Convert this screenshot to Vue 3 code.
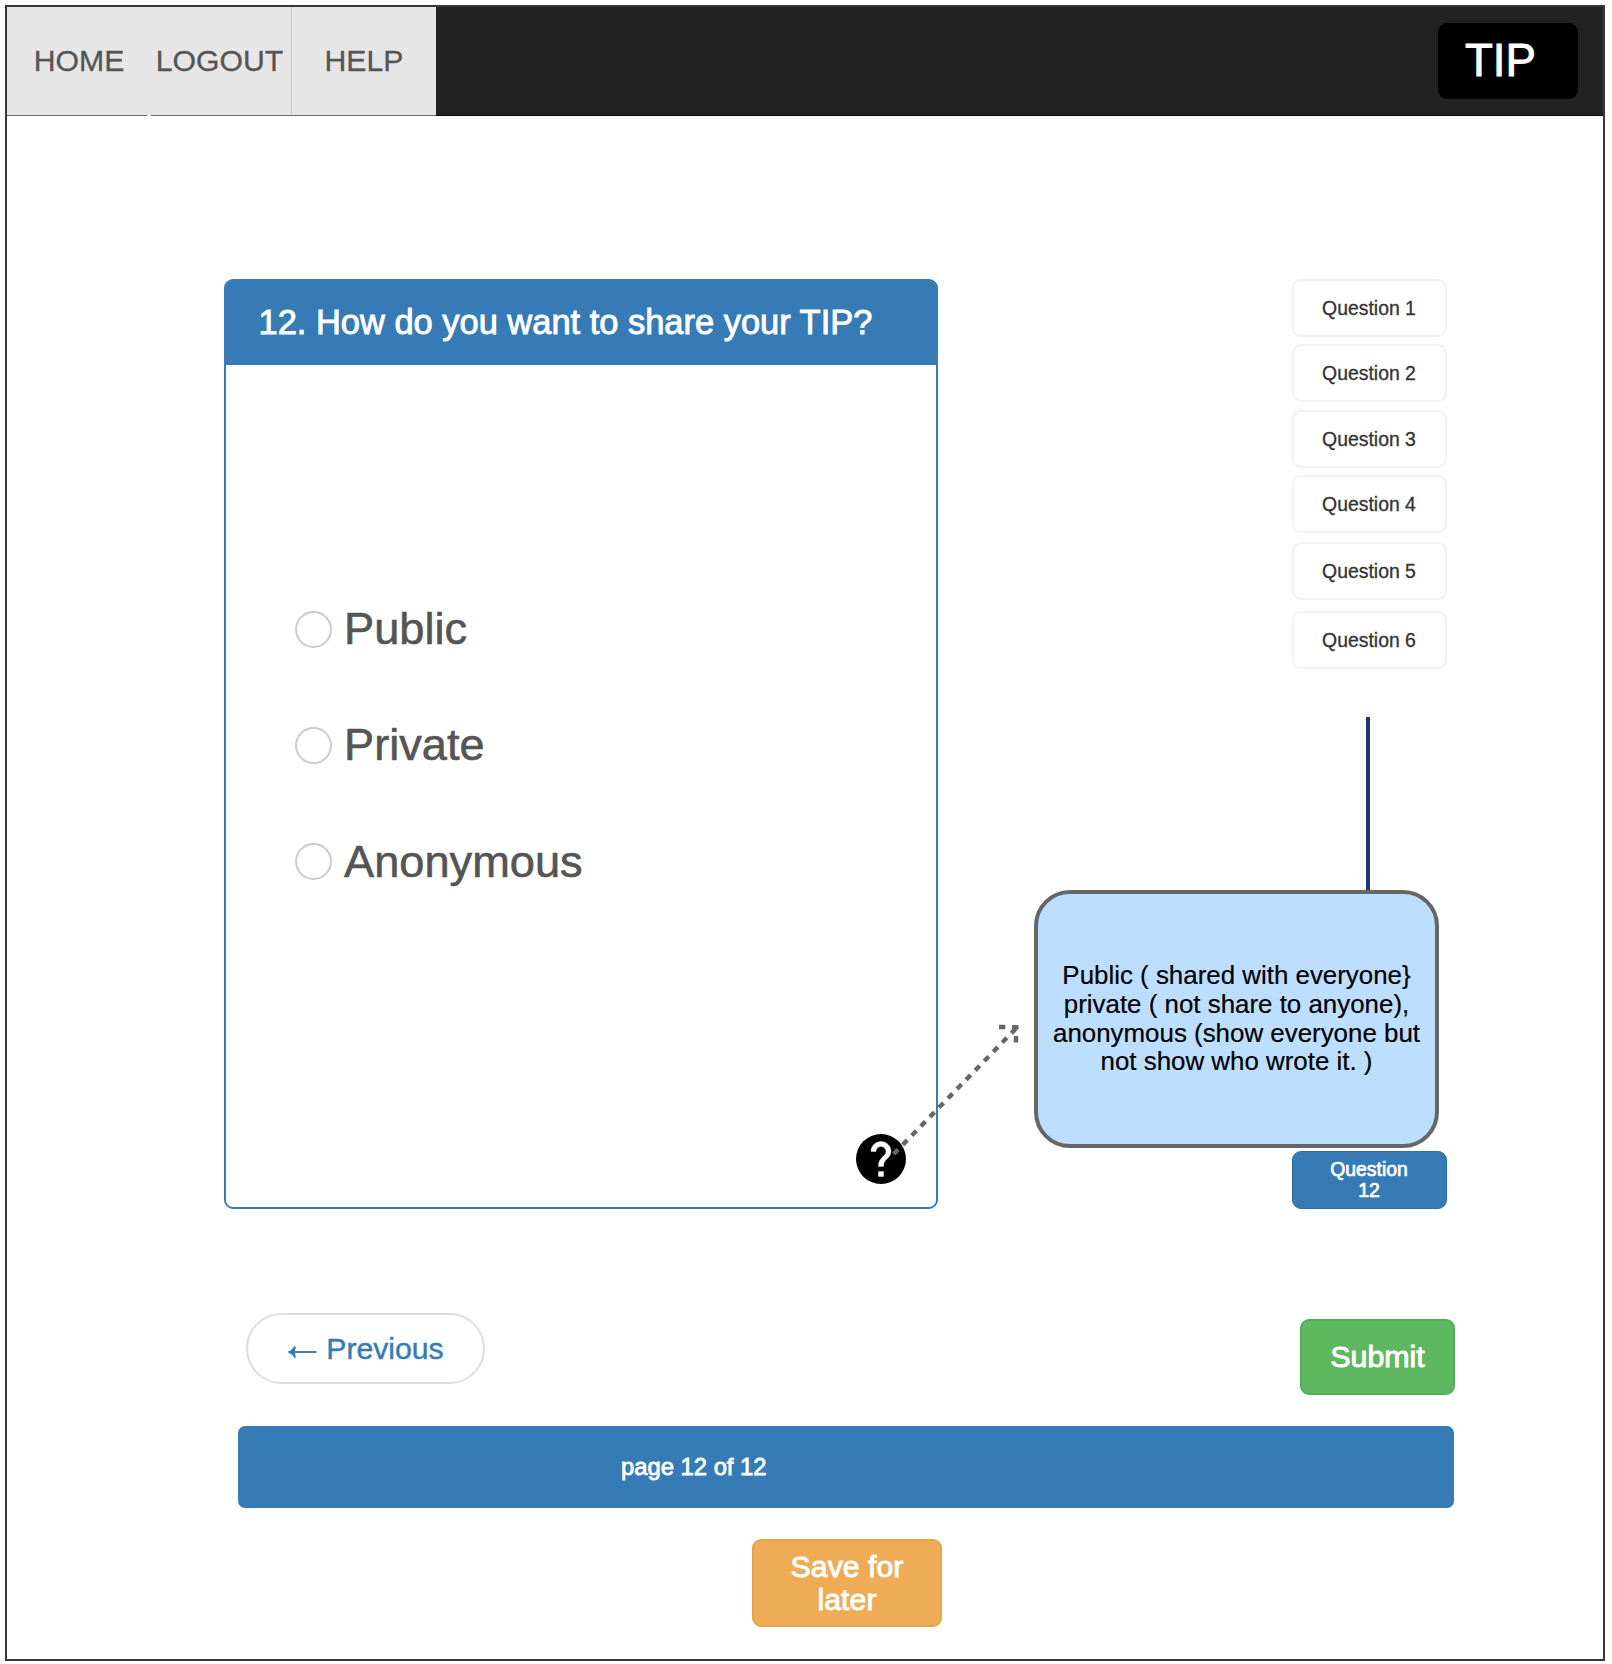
<script setup>
const tabs = ['HOME', 'LOGOUT', 'HELP']
const options = ['Public', 'Private', 'Anonymous']
const questions = [1, 2, 3, 4, 5, 6]
</script>

<template>
  <div class="canvas">
    <div class="page">
      <header class="navbar">
        <nav class="tabs">
          <a v-for="t in tabs" :key="t" class="tab" :class="t.toLowerCase()">{{ t }}</a>
        </nav>
        <div class="brand">TIP</div>
      </header>

      <main class="content">
        <section class="panel">
          <h1 class="panel-title">12. How do you want to share your TIP?</h1>
          <div class="options">
            <label v-for="o in options" :key="o" class="option">
              <span class="radio"></span>
              <span>{{ o }}</span>
            </label>
          </div>
          <svg class="help-icon" viewBox="0 0 24 24" width="60" height="60">
            <circle cx="12" cy="12" r="10" fill="#000" />
            <path
              fill="#fff"
              stroke="#fff"
              stroke-width="0.15"
              d="M13 19h-2v-2h2v2zm2.07-7.75l-.9.92C13.45 12.9 13 13.5 13 15h-2v-.5c0-1.1.45-2.1 1.17-2.83l1.24-1.26c.37-.36.59-.86.59-1.41 0-1.1-.9-2-2-2s-2 .9-2 2H8c0-2.21 1.79-4 4-4s4 1.79 4 4c0 .88-.36 1.68-.93 2.25z"
            />
          </svg>
        </section>

        <aside class="steps">
          <button v-for="q in questions" :key="q" class="step" :class="'step-' + q">Question {{ q }}</button>
          <span class="connector"></span>
          <button class="step active">Question<br />12</button>
        </aside>

        <div class="tooltip">
          <p>
            Public ( shared with everyone}<br />
            private ( not share to anyone),<br />
            anonymous (show everyone but<br />
            not show who wrote it. )
          </p>
        </div>
        <svg class="arrow" viewBox="0 0 140 140" width="140" height="140">
          <g fill="none" stroke="#666" stroke-width="4.4">
            <path d="M8.7 139.1L131 13.4" stroke-dasharray="6.5 6.48" />
            <path d="M114 12H120.3M127 12.3H133.5M131 21V27.5" />
          </g>
        </svg>
      </main>

      <div class="actions">
        <button class="previous">
          <svg class="back" viewBox="0 0 30 14" width="30" height="14">
            <path d="M6 7H29.5" fill="none" stroke="#367bb5" stroke-width="1.9" />
            <path d="M.5 7Q5 5 7.7 1L8.9 2L7.6 7L8.9 12L7.7 13Q5 9 .5 7Z" fill="#367bb5" />
          </svg>
          <span>Previous</span>
        </button>
        <button class="submit">Submit</button>
      </div>
      <div class="progress">page 12 of 12</div>
      <button class="save">Save for<br />later</button>
    </div>
  </div>
</template>

<style>
body {
  background: #fff;
}
</style>

<style scoped>
.canvas {
  box-sizing: border-box;
  width: 1612px;
  height: 1664px;
  padding: 5px 7px 3px 5px;
}
.page {
  box-sizing: border-box;
  display: flex;
  flex-direction: column;
  height: 1656px;
  border: 2px solid #38383a;
  background: #fff;
  font-family: 'Liberation Sans', Arial, sans-serif;
}
button {
  box-sizing: border-box;
  margin: 0;
  padding: 0;
  font-family: inherit;
}
.navbar {
  display: flex;
  flex: none;
  justify-content: space-between;
  height: 108.5px;
  background: #222;
  box-shadow: inset 0 -1px #080808;
}
.tabs {
  display: flex;
  width: 429px;
  background: #e6e6e6;
}
.tab {
  box-sizing: border-box;
  flex: none;
  height: 108.5px;
  line-height: 107px;
  font-size: 30.2px;
  color: #555;
  border-bottom: 1px solid #68686a;
  text-align: center;
  -webkit-text-stroke: 0.3px #555;
}
.tab.home {
  width: 140px;
  padding-left: 4px;
}
.tab.logout {
  width: 140px;
  margin-left: 4px;
  padding-right: 3px;
}
.tab.help {
  width: 145px;
  border-left: 1px solid #c6c6c6;
}
.brand {
  box-sizing: border-box;
  width: 140px;
  height: 76px;
  margin: 16px 25px 0 0;
  padding-left: 27px;
  border-radius: 9px;
  background: #000;
  color: #fff;
  font-size: 45.6px;
  line-height: 76px;
  -webkit-text-stroke: 0.9px #fff;
}
.content {
  position: relative;
  display: flex;
  flex: none;
  justify-content: space-between;
  height: 930px;
  margin: 163.5px 156px 0 217px;
}
.panel {
  box-sizing: border-box;
  display: flex;
  flex-direction: column;
  width: 714px;
  border: 2px solid #367bb5;
  border-radius: 9px;
}
.panel-title {
  height: 84px;
  margin: 0;
  padding-left: 32.5px;
  border-radius: 6px 6px 0 0;
  background: #367bb5;
  color: #fff;
  font-size: 34.45px;
  font-weight: 400;
  line-height: 82px;
  -webkit-text-stroke: 0.9px #fff;
}
.options {
  display: flex;
  flex-direction: column;
  gap: 60.3px;
  margin: 236px 0 0 69px;
}
.option {
  display: flex;
  align-items: center;
  height: 56px;
  gap: 12px;
  font-size: 45.2px;
  color: #555;
  -webkit-text-stroke: 0.6px #555;
}
.radio {
  box-sizing: border-box;
  width: 37px;
  height: 37px;
  border: 2px solid #ccc;
  border-radius: 50%;
}
.help-icon {
  margin: auto 25.5px 18px auto;
}
.steps {
  display: flex;
  flex-direction: column;
  align-items: center;
  width: 156px;
}
.step {
  flex: none;
  width: 155px;
  height: 58px;
  border: 2px solid #f2f2f2;
  border-radius: 9px;
  background: #fff;
  color: #333;
  font-size: 19.4px;
  line-height: 21px;
  -webkit-text-stroke: 0.3px #333;
}
.step-2 {
  margin-top: 7px;
}
.step-3 {
  margin-top: 8px;
}
.step-4 {
  margin-top: 7px;
}
.step-5 {
  margin-top: 9px;
}
.step-6 {
  margin-top: 11px;
}
.connector {
  width: 4px;
  height: 180px;
  margin: 48px 2px 0 0;
  background: #1f3585;
}
.step.active {
  margin-top: auto;
  border-color: #2e6da4;
  border-width: 1px;
  background: #367bb5;
  color: #fff;
  -webkit-text-stroke: 0.7px #fff;
}
.tooltip {
  box-sizing: border-box;
  position: absolute;
  left: 810px;
  top: 611px;
  display: flex;
  align-items: center;
  justify-content: center;
  width: 405px;
  height: 258px;
  border: 4px solid #666;
  border-radius: 36px;
  background: #bddefe;
}
.tooltip p {
  margin: 0 0 1px;
  color: #000;
  font-size: 25.9px;
  line-height: 28.7px;
  text-align: center;
  white-space: nowrap;
  -webkit-text-stroke: 0.2px #000;
}
.arrow {
  position: absolute;
  left: 661px;
  top: 736px;
}
.actions {
  display: flex;
  flex: none;
  justify-content: space-between;
  align-items: flex-start;
  margin: 104px 148px 0 239px;
}
.previous {
  display: flex;
  align-items: center;
  justify-content: center;
  gap: 9px;
  width: 239px;
  height: 71px;
  border: 2px solid #ddd;
  border-radius: 36px;
  background: #fff;
  color: #367bb5;
  font-size: 30.2px;
  -webkit-text-stroke: 0.4px #367bb5;
}
.back {
  margin-top: 6px;
}
.submit {
  width: 155px;
  height: 76px;
  margin-top: 6px;
  padding-bottom: 2px;
  border: 2px solid #52b053;
  border-radius: 9px;
  background: #5fb760;
  color: #fff;
  font-size: 30.4px;
  -webkit-text-stroke: 0.9px #fff;
}
.progress {
  box-sizing: border-box;
  flex: none;
  height: 82px;
  margin: 31px 149px 0 231px;
  padding-left: 383px;
  border-radius: 7px;
  background: #367bb5;
  color: #fff;
  font-size: 23.8px;
  line-height: 82px;
  -webkit-text-stroke: 0.8px #fff;
}
.save {
  flex: none;
  width: 190px;
  height: 88px;
  margin: 31px 0 0 745px;
  padding-bottom: 1px;
  border: 2px solid #eca347;
  border-radius: 9px;
  background: #eeac57;
  color: #fff;
  font-size: 30.3px;
  line-height: 33px;
  -webkit-text-stroke: 0.9px #fff;
}
</style>
